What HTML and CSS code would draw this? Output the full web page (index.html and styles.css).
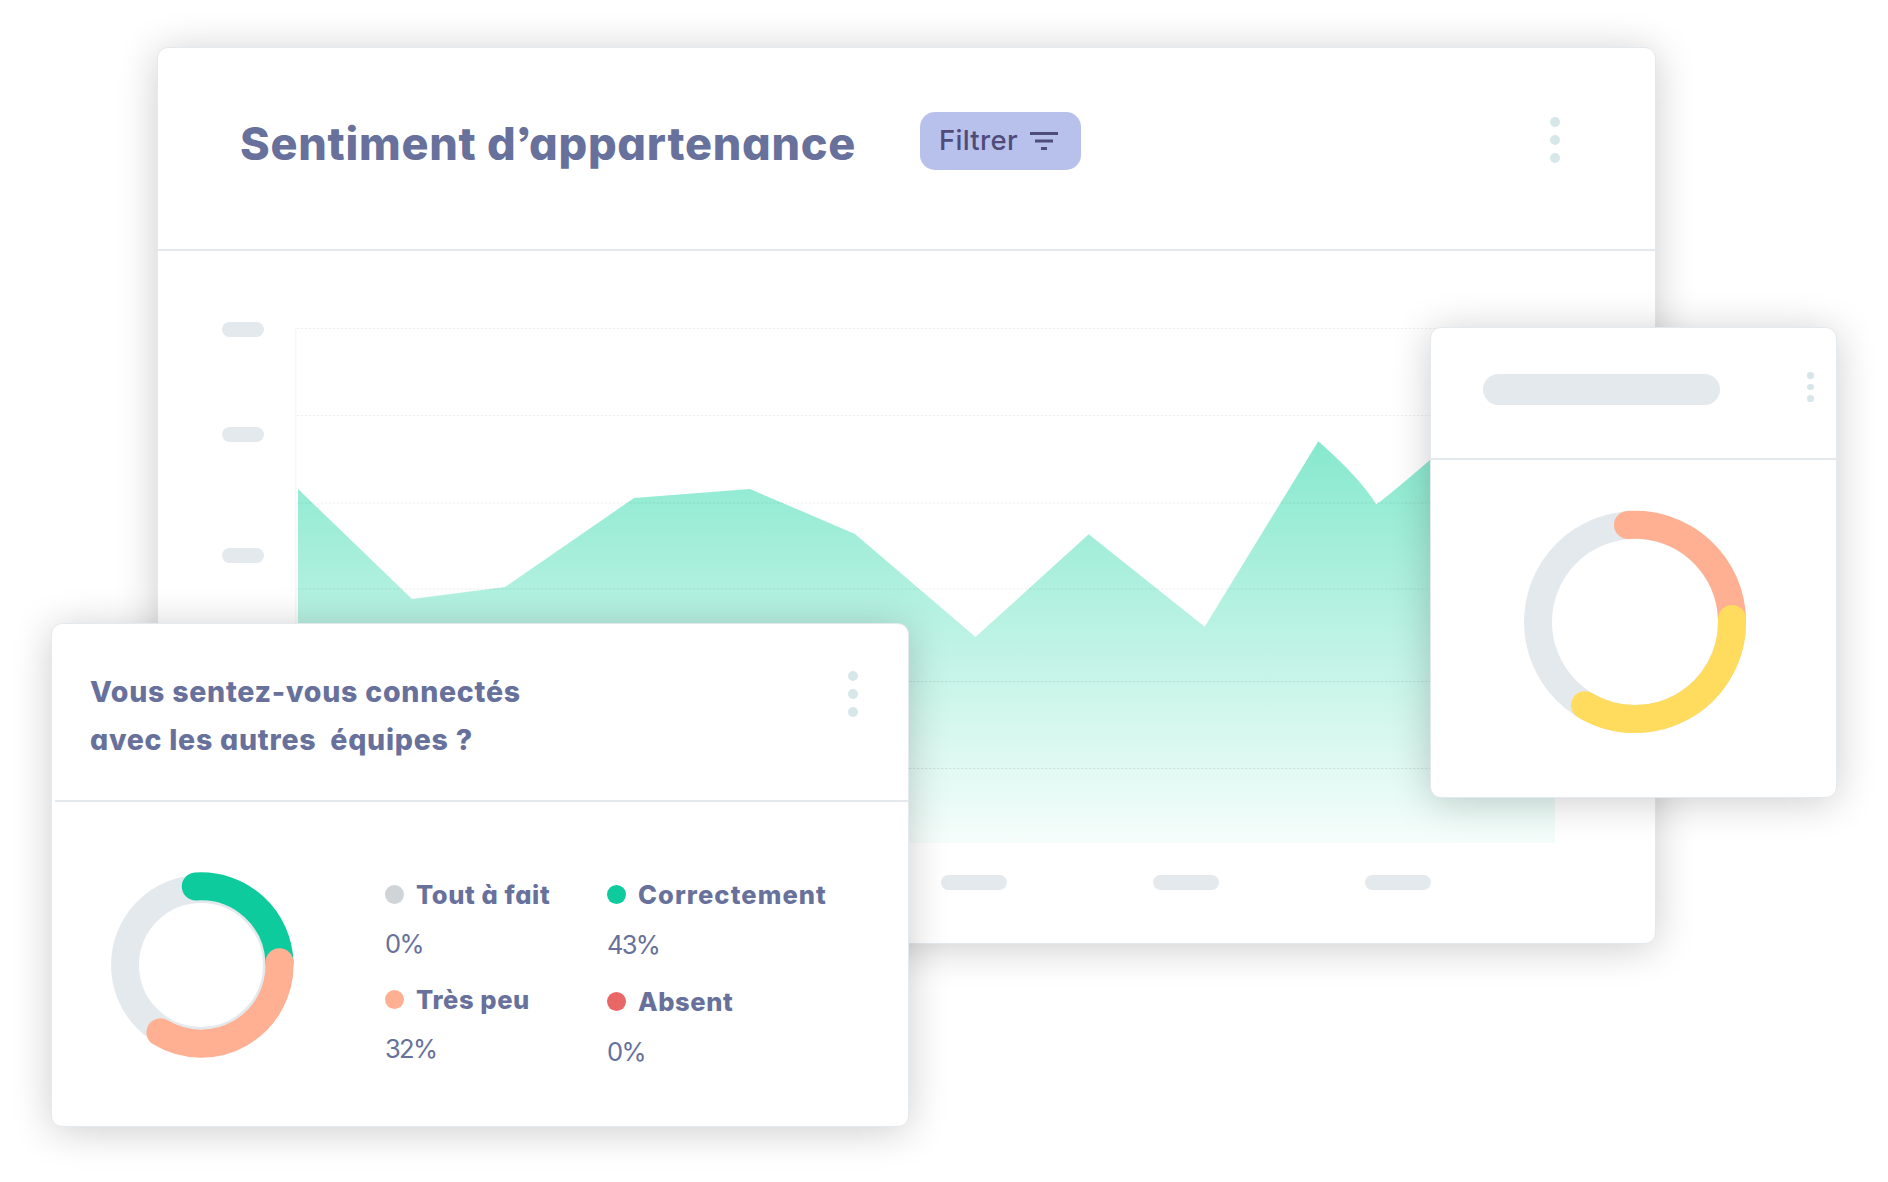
FILE: index.html
```html
<!DOCTYPE html>
<html lang="fr">
<head>
    <meta charset="UTF-8">
    <meta name="viewport" content="width=device-width, initial-scale=1.0">
    <title>Sentiment d’appartenance</title>
    <link rel="stylesheet" href="styles.css">
</head>
<body>
<div class="stage">

    <!-- main chart -->
    <section class="card main-card">
        <div class="main-header">
            <h1>Sentiment d’appartenance</h1>
            <button class="filter">
                <span>Filtrer</span>
                <svg width="28" height="18" viewBox="0 0 28 18">
                    <path d="M0 1.5H28M5 9H23M11 16.5H17" stroke="#4f4c7a" stroke-width="2.8"/>
                </svg>
            </button>
            <div class="dots"><i></i><i></i><i></i></div>
        </div>
        <div class="chart">
            <div class="y-labels"><i></i><i></i><i></i></div>
            <svg class="plot" width="1261" height="521" viewBox="295 322 1261 521">
                <defs>
                    <linearGradient id="fill" x1="0" y1="441" x2="0" y2="843" gradientUnits="userSpaceOnUse">
                        <stop offset="0" stop-color="#0ed29c" stop-opacity="0.5"/>
                        <stop offset="1" stop-color="#0ed29c" stop-opacity="0.04"/>
                    </linearGradient>
                </defs>
                <path d="M295.5 328V843" stroke="#f7f7f8" stroke-width="2"/>
                <path d="M298 489L412 599L505 587L634 498L750 489L855 534L975.5 637L1088.7 534.3L1204.7 626.7L1318.3 441.3Q1360 478 1376 504Q1380 503 1430 460L1555 380V843H298Z" fill="url(#fill)"/>
                <g stroke="#000" stroke-dasharray="2.5 1.5">
                    <path d="M297 328.5H1555M297 415.5H1555" stroke-opacity="0.06"/>
                    <path d="M297 503H1555M297 589H1555" stroke-opacity="0.03" stroke-width="2"/>
                    <path d="M297 681.5H1555M297 768.5H1555" stroke-opacity="0.09"/>
                </g>
            </svg>
        </div>
        <div class="x-labels"><i></i><i></i><i></i><i></i><i></i><i></i></div>
    </section>

    <!-- small donut -->
    <section class="card side-card">
        <div class="side-header">
            <div class="placeholder"></div>
            <div class="dots small"><i></i><i></i><i></i></div>
        </div>
        <svg class="side-donut" width="224" height="224" viewBox="-112 -112 224 224" fill="none" stroke-width="28" stroke-linecap="round">
            <circle r="97" stroke="#e4e9ed"/>
            <path d="M-7 -97A97 97 0 0 1 97 -3" stroke="#ffb092" />
            <path d="M97 -3A97 97 0 0 1 -50 83.2" stroke="#ffdb5e"/>
        </svg>
    </section>

    <!-- question detail -->
    <section class="card question-card">
        <div class="question-header">
            <h2>Vous sentez-vous connectés<br>avec les autres &nbsp;équipes ?</h2>
            <div class="dots"><i></i><i></i><i></i></div>
        </div>
        <div class="question-body">
            <svg class="donut" width="186" height="186" viewBox="-93 -93 186 186" fill="none" stroke-width="28" stroke-linecap="round">
                <circle r="76" stroke="#e4e9ed"/>
                <path d="M-5.2 -78.5A78.5 78.5 0 0 1 78.5 -2.7" stroke="#0dcb9c"/>
                <path d="M78.5 -2.7A78.5 78.5 0 0 1 -40.6 67.3" stroke="#ffb092"/>
            </svg>
            <div class="legend">
                <div class="item"><p class="name grey">Tout à fait</p><p class="value">0%</p></div>
                <div class="item"><p class="name orange">Très peu</p><p class="value">32%</p></div>
            </div>
            <div class="legend second-col">
                <div class="item"><p class="name green">Correctement</p><p class="value">43%</p></div>
                <div class="item"><p class="name red">Absent</p><p class="value">0%</p></div>
            </div>
        </div>
    </section>

</div>
</body>
</html>
```
FILE: styles.css
```css
*{
    box-sizing: border-box;
}
body{
    margin: 0;
    background-color: white;
    font-family: Inter, "Open Sans", sans-serif;
    font-feature-settings: "cv11", "ss03";
    color: #67719b;
}
h1, h2, p{
    margin: 0;
}
.stage{
    position: relative;
    width: 1888px;
    height: 1182px;
    padding: 47px 0 0 157px;
    overflow: hidden;
}
.card{
    background-color: white;
    border: 1px solid #e4e9ed;
    border-radius: 11px;
    box-shadow: 0 4px 40px rgba(0, 0, 0, 0.2);
}
.dots{
    display: flex;
    flex-direction: column;
    gap: 8px;
}
.dots i{
    width: 10px;
    height: 10px;
    border-radius: 50%;
    background-color: #d7e7e9;
}
.dots.small{
    gap: 5px;
}
.dots.small i{
    width: 6.7px;
    height: 6.7px;
}

/* main card */
.main-card{
    width: 1499px;
    height: 897px;
}
.main-header{
    display: flex;
    align-items: flex-start;
    height: 203px;
    padding: 64px 95px 0 82px;
    border-bottom: 2px solid #e4e9ed;
}
h1{
    width: 680px;
    margin-top: -1px;
    font-size: 45px;
    line-height: 66px;
    font-weight: 800;
    letter-spacing: 0.75px;
    white-space: nowrap;
}
.filter{
    display: flex;
    align-items: center;
    gap: 13px;
    width: 161px;
    height: 58px;
    padding: 0 0 0 19px;
    border: none;
    border-radius: 15px;
    background-color: #b8c1eb;
    color: #4f4c7a;
    font: inherit;
    font-size: 27.5px;
    font-weight: 500;
    letter-spacing: 0.3px;
}
.filter span{
    width: 78px;
    margin-top: -2px;
}
.main-header .dots{
    margin: 5px 0 0 auto;
}
.chart{
    display: flex;
    padding: 71px 0 0 64px;
}
.y-labels{
    width: 42px;
    margin-right: 31px;
}
.y-labels i{
    display: block;
    height: 15px;
    border-radius: 8px;
    background-color: #e4e9ed;
    margin-bottom: 90px;
}
.y-labels i:nth-child(2){
    margin-bottom: 106px;
}
.plot{
    display: block;
}
.x-labels{
    display: flex;
    gap: 146px;
    padding: 32px 0 0 147px;
}
.x-labels i{
    width: 66px;
    height: 15px;
    border-radius: 8px;
    background-color: #e4e9ed;
}

/* small card on the right */
.side-card{
    position: absolute;
    left: 1430px;
    top: 327px;
    width: 407px;
    height: 471px;
}
.side-header{
    display: flex;
    justify-content: space-between;
    align-items: flex-start;
    height: 132px;
    padding: 46px 22.5px 0 52px;
    border-bottom: 2px solid #e4e9ed;
}
.placeholder{
    width: 237px;
    height: 31px;
    border-radius: 16px;
    background-color: #e4e9ed;
}
.side-header .dots{
    margin-top: -2px;
}
.side-donut{
    display: block;
    margin: 50px 0 0 92px;
}

/* question card */
.question-card{
    position: absolute;
    left: 51px;
    top: 623px;
    width: 858px;
    height: 504px;
}
.question-header{
    display: flex;
    justify-content: space-between;
    align-items: flex-start;
    height: 178px;
    margin-left: 3px;
    padding: 44px 50px 0 35px;
    border-bottom: 2px solid #e4e9ed;
}
h2{
    font-size: 28.5px;
    line-height: 48px;
    font-weight: 800;
    letter-spacing: 0.75px;
}
.question-header .dots{
    margin-top: 3px;
}
.question-body{
    display: flex;
    align-items: flex-start;
    padding: 70px 0 0 56px;
}
.legend{
    width: 222px;
    margin: 3px 0 0 91px;
}
.legend.second-col{
    margin: 3px 0 0 0;
}
.item{
    height: 105px;
}
.second-col .item{
    height: 107px;
}
.name{
    display: flex;
    align-items: center;
    gap: 12px;
    height: 38px;
    font-size: 25.5px;
    font-weight: 800;
    letter-spacing: 0.6px;
    white-space: nowrap;
}
.name::before{
    content: "";
    width: 19px;
    height: 19px;
    border-radius: 50%;
}
.grey::before{ background-color: #cfd4d8; }
.orange::before{ background-color: #ffb092; }
.green::before{ background-color: #0dcb9c; }
.red::before{ background-color: #ea6767; }
.green{
    letter-spacing: 1.1px;
}
.value{
    margin-top: 12px;
    font-size: 25.5px;
    line-height: 38px;
    letter-spacing: -1.7px;
}
.second-col .value{
    margin-top: 13px;
}
```
